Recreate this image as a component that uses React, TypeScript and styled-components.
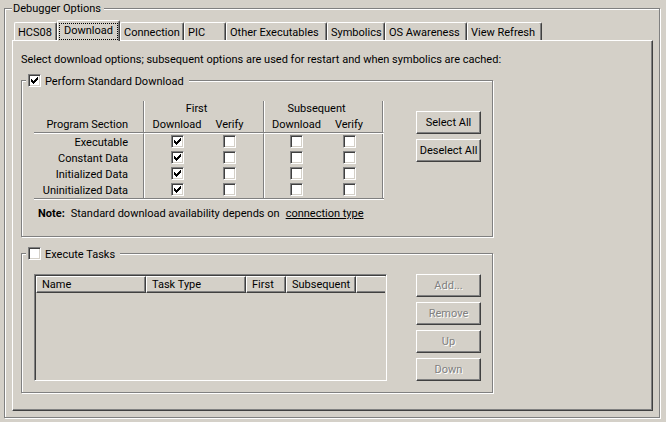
import React, { useState } from "react";
import styled, { createGlobalStyle, css } from "styled-components";

const face = "#d4d0c8";
const light = "#ffffff";
const shade = "#808080";
const dark = "#404040";

const GlobalStyle = createGlobalStyle`
  *, *::before, *::after { box-sizing: border-box; }
  body {
    margin: 0;
    background: ${face};
    color: #000;
    font: 11px/14px Roboto, Tahoma, sans-serif;
    white-space: nowrap;
  }
  button, input { font: inherit; color: inherit; margin: 0; }
`;

const etched = css`
  border: 1px solid ${shade};
  box-shadow: 1px 1px 0 ${light}, inset 1px 1px 0 ${light};
`;

const raised = css`
  border: 1px solid;
  border-color: ${light} ${dark} ${dark} ${light};
  box-shadow: inset -1px -1px 0 ${shade};
`;

const sunken = css`
  border: 1px solid;
  border-color: ${shade} ${light} ${light} ${shade};
  box-shadow: inset 1px 1px 0 ${dark}, inset -1px -1px 0 ${face};
`;

const Window = styled.main`
  padding: 0 6px 4px 4px;
`;

const OptionsGroup = styled.fieldset`
  ${etched}
  margin: 0;
  min-width: 0;
  padding: 4px 6px 6px 7px;
`;

const OptionsLegend = styled.legend`
  padding: 2px 3px 0 1px;
  background: ${face};
`;

const TabBar = styled.div`
  display: flex;
  align-items: flex-end;
  padding-left: 2px;
`;

const Tab = styled.button<{ $width: number; $selected: boolean }>`
  flex: 0 0 ${(p) => p.$width}px;
  height: 18px;
  padding: 2px 0 0 3px;
  text-align: left;
  background: ${face};
  border: solid;
  border-width: 1px 1px 0 1px;
  border-color: ${light} ${dark} ${light} ${light};
  border-radius: 2px 2px 0 0;
  box-shadow: inset -1px 0 0 ${shade};
  outline: none;

  ${(p) =>
    p.$selected &&
    css`
      height: 21px;
      margin-bottom: -1px;
      padding: 1px;
      z-index: 1;
    `}
`;

const FocusFrame = styled.span`
  display: block;
  height: 17px;
  padding: 0 4px;
  border: 1px dotted #000;
`;

const Page = styled.section`
  ${raised}
  padding: 12px 8px 17px;
`;

const Column = styled.div`
  display: flex;
  flex-direction: column;
  max-width: 472px;
`;

const Intro = styled.p`
  margin: 0;
`;

const Group = styled.fieldset<{ $gap: number }>`
  ${etched}
  margin: ${(p) => p.$gap}px 0 0;
  min-width: 0;
  padding: 13px 11px 11px 12px;
`;

const GroupLegend = styled.legend`
  margin-left: -8px;
  padding: 2px 5px 0 2px;
  background: ${face};
`;

const CheckLabel = styled.label`
  display: flex;
  align-items: flex-start;
  gap: 4px;
  height: 14px;
`;

const CheckText = styled.span`
  line-height: 16px;
`;

const tick = `url("data:image/svg+xml,%3Csvg xmlns='http://www.w3.org/2000/svg' width='7' height='7' shape-rendering='crispEdges'%3E%3Cpath d='M0 2h1v1h1v1h1v-1h1v-1h1v-1h1v-1h1v3h-1v1h-1v1h-1v1h-1v1h-1v-1h-1v-1h-1z'/%3E%3C/svg%3E")`;

const Check = styled.input`
  appearance: none;
  display: block;
  flex: none;
  width: 13px;
  height: 13px;
  ${sunken}
  background: #fff center / 7px 7px no-repeat;

  &:checked { background-image: ${tick}; }
`;

const Split = styled.div`
  display: flex;
  justify-content: space-between;
  align-items: flex-start;
`;

const ButtonStack = styled.div<{ $offset: number }>`
  display: flex;
  flex-direction: column;
  gap: 5px;
  width: 65px;
  margin-top: ${(p) => p.$offset}px;
`;

const PushButton = styled.button`
  height: 23px;
  padding: 0;
  background: ${face};
  ${raised}

  &:disabled {
    color: ${shade};
    text-shadow: 1px 1px 0 ${light};
  }
`;

const Sections = styled.table`
  table-layout: fixed;
  width: 350px;
  border-spacing: 0;
  border-bottom: 1px solid ${shade};
  box-shadow: 0 1px 0 ${light};
`;

const Col = styled.col<{ $width: number }>`
  width: ${(p) => p.$width}px;
`;

const divider = css`
  border-left: 1px solid ${shade};
  box-shadow: inset 1px 0 0 ${light};
`;

const edge = css`
  border-right: 1px solid ${light};
  background: linear-gradient(${shade}, ${shade}) right / 1px 100% no-repeat padding-box;
`;

const HeadCell = styled.th<{ $divided?: boolean; $last?: boolean; $tail?: boolean; $ruled?: boolean }>`
  height: ${(p) => (p.$ruled ? 17 : 15)}px;
  padding: ${(p) => (p.$ruled ? 2 : 1)}px ${(p) => (p.$tail ? 14 : 0)}px 0 0;
  font-weight: normal;
  text-align: center;
  vertical-align: top;
  ${(p) => p.$divided && divider}
  ${(p) => p.$last && edge}
  ${(p) =>
    p.$ruled &&
    css`
      border-bottom: 1px solid ${shade};
    `}
`;

const SectionHead = styled(HeadCell)`
  padding-right: 15px;
  text-align: right;
`;

const SectionName = styled.th`
  height: 16px;
  padding: 2px 15px 0 0;
  font-weight: normal;
  text-align: right;
  vertical-align: top;
  tr:first-child > & { border-top: 1px solid ${light}; }
`;

const CheckCell = styled.td<{ $divided?: boolean; $tail?: boolean; $last?: boolean }>`
  height: 16px;
  padding: 1px ${(p) => (p.$tail ? 14 : 0)}px 2px 0;
  ${(p) => p.$divided && divider}
  ${(p) => p.$last && edge}
  tr:first-child > & { border-top: 1px solid ${light}; }

  ${Check} { margin: 0 auto; }
`;

const Note = styled.p`
  margin: 8px 0 4px;
  padding-left: 4px;
  display: flex;
  gap: 6px;
`;

const NoteLink = styled.a`
  color: inherit;
  text-decoration: underline;
`;

const TaskList = styled.div`
  ${sunken}
  width: 353px;
  height: 107px;
  padding: 1px;
`;

const TaskTable = styled.table`
  table-layout: fixed;
  width: 100%;
  border-spacing: 0;
`;

const TaskHead = styled.th<{ $open?: boolean }>`
  ${raised}
  height: 17px;
  padding: 1px 0 0 5px;
  line-height: 14px;
  font-weight: normal;
  text-align: left;
  ${(p) =>
    p.$open &&
    css`
      border-right: 0;
      box-shadow: inset 0 -1px 0 ${shade};
    `}
`;

const tabs = [
  { name: "HCS08", width: 43 },
  { name: "Download", width: 62 },
  { name: "Connection", width: 64 },
  { name: "PIC", width: 42 },
  { name: "Other Executables", width: 101 },
  { name: "Symbolics", width: 58 },
  { name: "OS Awareness", width: 82 },
  { name: "View Refresh", width: 75 },
];

const sections = ["Executable", "Constant Data", "Initialized Data", "Uninitialized Data"];

const slots = [
  { name: "First Download", divided: true, checked: true },
  { name: "First Verify", tail: true },
  { name: "Subsequent Download", divided: true },
  { name: "Subsequent Verify", tail: true, last: true },
];

function SectionTable() {
  return (
    <Sections>
      <colgroup>
        <Col $width={109} />
        <Col $width={67} />
        <Col $width={53} />
        <Col $width={66} />
        <Col $width={55} />
      </colgroup>
      <thead>
        <tr>
          <HeadCell />
          <HeadCell colSpan={2} $divided $tail>First</HeadCell>
          <HeadCell colSpan={2} $divided $tail $last>Subsequent</HeadCell>
        </tr>
        <tr>
          <SectionHead $ruled>Program Section</SectionHead>
          <HeadCell $divided $ruled>Download</HeadCell>
          <HeadCell $tail $ruled>Verify</HeadCell>
          <HeadCell $divided $ruled>Download</HeadCell>
          <HeadCell $tail $last $ruled>Verify</HeadCell>
        </tr>
      </thead>
      <tbody>
        {sections.map((section) => (
          <tr key={section}>
            <SectionName scope="row">{section}</SectionName>
            {slots.map((slot) => (
              <CheckCell key={slot.name} $divided={slot.divided} $tail={slot.tail} $last={slot.last}>
                <Check type="checkbox" aria-label={`${section}: ${slot.name}`} defaultChecked={slot.checked} />
              </CheckCell>
            ))}
          </tr>
        ))}
      </tbody>
    </Sections>
  );
}

export default function App() {
  const [selected, setSelected] = useState("Download");
  return (
    <Window>
      <GlobalStyle />
      <OptionsGroup>
        <OptionsLegend>Debugger Options</OptionsLegend>
        <TabBar role="tablist">
          {tabs.map(({ name, width }) => (
            <Tab
              key={name}
              type="button"
              role="tab"
              aria-selected={name === selected}
              $width={width}
              $selected={name === selected}
              onClick={() => setSelected(name)}
            >
              {name === selected ? <FocusFrame>{name}</FocusFrame> : name}
            </Tab>
          ))}
        </TabBar>
        <Page role="tabpanel">
          <Column>
            <Intro>
              Select download options; subsequent options are used for restart and when symbolics are cached:
            </Intro>
            <Group $gap={5}>
              <GroupLegend>
                <CheckLabel>
                  <Check type="checkbox" defaultChecked />
                  <CheckText>Perform Standard Download</CheckText>
                </CheckLabel>
              </GroupLegend>
              <Split>
                <SectionTable />
                <ButtonStack $offset={10}>
                  <PushButton type="button">Select All</PushButton>
                  <PushButton type="button">Deselect All</PushButton>
                </ButtonStack>
              </Split>
              <Note>
                <strong>Note:</strong> Standard download availability depends on
                <NoteLink href="#connection-type">connection type</NoteLink>
              </Note>
            </Group>
            <Group $gap={8}>
              <GroupLegend>
                <CheckLabel>
                  <Check type="checkbox" />
                  <CheckText>Execute Tasks</CheckText>
                </CheckLabel>
              </GroupLegend>
              <Split>
                <TaskList>
                  <TaskTable>
                    <colgroup>
                      <Col $width={110} />
                      <Col $width={100} />
                      <Col $width={40} />
                      <Col $width={70} />
                      <col />
                    </colgroup>
                    <thead>
                      <tr>
                        <TaskHead>Name</TaskHead>
                        <TaskHead>Task Type</TaskHead>
                        <TaskHead>First</TaskHead>
                        <TaskHead>Subsequent</TaskHead>
                        <TaskHead $open />
                      </tr>
                    </thead>
                  </TaskTable>
                </TaskList>
                <ButtonStack $offset={0}>
                  <PushButton type="button" disabled>Add...</PushButton>
                  <PushButton type="button" disabled>Remove</PushButton>
                  <PushButton type="button" disabled>Up</PushButton>
                  <PushButton type="button" disabled>Down</PushButton>
                </ButtonStack>
              </Split>
            </Group>
          </Column>
        </Page>
      </OptionsGroup>
    </Window>
  );
}
